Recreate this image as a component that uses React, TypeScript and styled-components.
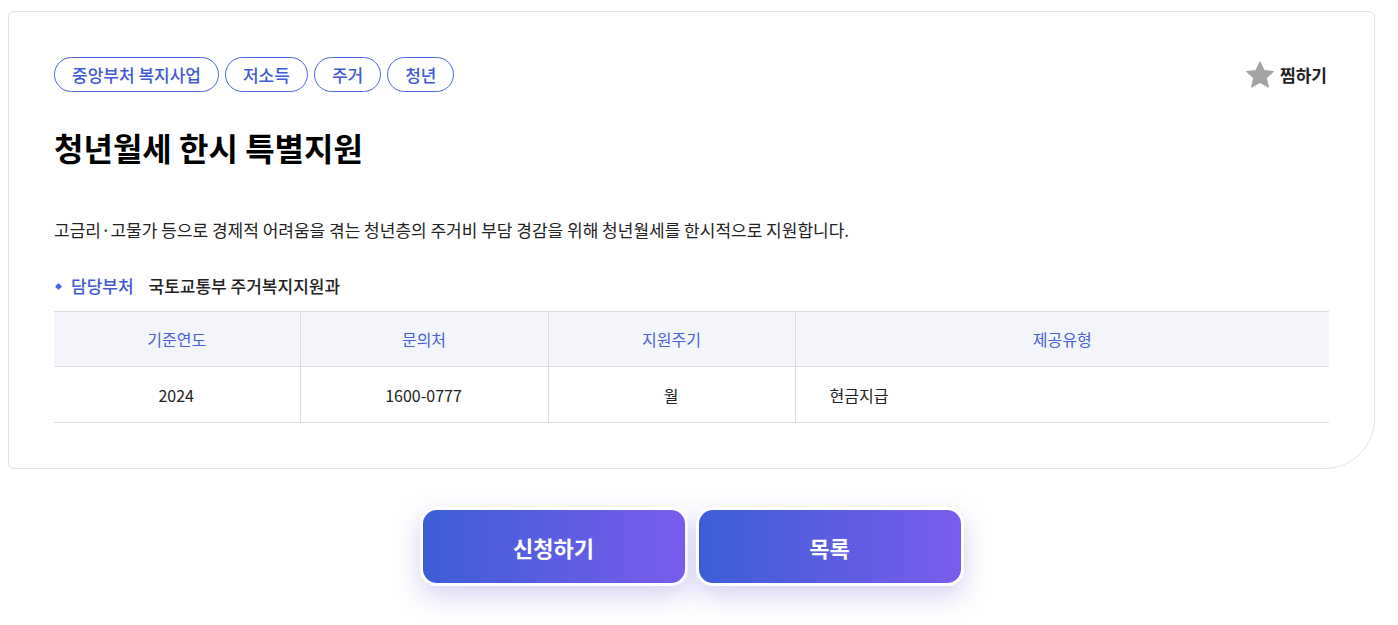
import React from "react";
import styled, { createGlobalStyle } from "styled-components";

const Global = createGlobalStyle`
  body {
    margin: 8px;
    font-family: "Noto Sans CJK KR", "Noto Sans", sans-serif;
    color: #222;
    background: #fff;
  }
  * { box-sizing: border-box; }
`;

const Page = styled.div`
  width: 1367px;
  padding-bottom: 40px;
`;

const Card = styled.section`
  margin-top: 3px;
  border: 1px solid #e2e2e2;
  border-radius: 6px 6px 50px 6px;
  padding: 45px 45px 45px 45px;
  background: #fff;
`;

const TopRow = styled.div`
  display: flex;
  align-items: center;
  justify-content: space-between;
`;

const Tags = styled.div`
  display: flex;
  gap: 6px;
`;

const Tag = styled.span`
  display: inline-flex;
  align-items: center;
  height: 35px;
  padding: 0 17px;
  border: 1px solid #4a67dc;
  border-radius: 18px;
  color: #3f5ad6;
  font-size: 17px;
  font-weight: 500;
`;

const Wish = styled.button`
  display: flex;
  align-items: center;
  gap: 5px;
  border: 0;
  background: none;
  padding: 0;
  margin-right: 2px;
  font-family: inherit;
  font-size: 17px;
  font-weight: 700;
  color: #222;
  cursor: pointer;
`;

const Title = styled.h1`
  margin: 33px 0 0;
  font-size: 32px;
  font-weight: 700;
  line-height: 44px;
  color: #000;
`;

const Desc = styled.p`
  margin: 48px 0 0;
  font-size: 17px;
  font-weight: 400;
  line-height: 26px;
  color: #222;
`;

const Dept = styled.div`
  display: flex;
  align-items: center;
  margin-top: 30px;
  font-size: 17px;
  line-height: 26px;
`;

const Bullet = styled.span`
  width: 5px;
  height: 5px;
  margin: 0 10px 0 2px;
  border-radius: 1px;
  background: #4a67dc;
  transform: rotate(45deg);
`;

const DeptLabel = styled.span`
  color: #3f5ad6;
  font-weight: 500;
  margin-right: 15px;
`;

const DeptValue = styled.span`
  color: #222;
  font-weight: 500;
`;

const Table = styled.table`
  width: 100%;
  margin-top: 12px;
  border-collapse: collapse;
  table-layout: fixed;
  border-top: 1px solid #dcdcdc;
`;

const Th = styled.th`
  height: 55px;
  background: #f4f5fa;
  color: #4660d8;
  font-size: 16px;
  font-weight: 400;
  border-bottom: 1px solid #dcdcdc;
  border-left: 1px solid #dcdcdc;
  &:first-child { border-left: 0; }
`;

const Td = styled.td<{ $left?: boolean }>`
  height: 56px;
  text-align: ${(p) => (p.$left ? "left" : "center")};
  padding-left: ${(p) => (p.$left ? "34px" : "0")};
  font-size: 16px;
  font-weight: 400;
  color: #222;
  border-bottom: 1px solid #dcdcdc;
  border-left: 1px solid #dcdcdc;
  &:first-child { border-left: 0; }
`;

const Actions = styled.div`
  display: flex;
  justify-content: center;
  gap: 8px;
  margin-top: 38px;
`;

const ActionButton = styled.button`
  width: 268px;
  height: 79px;
  border: 3px solid #fff;
  border-radius: 17px;
  background: linear-gradient(90deg, #3b5fd6 0%, #7a5ced 100%);
  box-shadow: 0 10px 26px rgba(96, 92, 210, 0.28);
  color: #fff;
  font-family: inherit;
  font-size: 22px;
  font-weight: 700;
  cursor: pointer;
`;

const Star = () => (
  <svg width="30" height="30" viewBox="0 0 24 24" aria-hidden="true">
    <path
      d="M12 1.6l3.2 6.9 7.3.8-5.5 5 1.6 7.3L12 17.8l-6.6 3.8 1.6-7.3-5.5-5 7.3-.8z"
      fill="#a3a3a3"
      stroke="#a3a3a3"
      strokeWidth="1"
      strokeLinejoin="round"
    />
  </svg>
);

export default function App() {
  return (
    <Page>
      <Global />
      <Card>
        <TopRow>
          <Tags>
            <Tag>중앙부처 복지사업</Tag>
            <Tag>저소득</Tag>
            <Tag>주거</Tag>
            <Tag>청년</Tag>
          </Tags>
          <Wish>
            <Star />
            찜하기
          </Wish>
        </TopRow>
        <Title>청년월세 한시 특별지원</Title>
        <Desc>
          고금리·고물가 등으로 경제적 어려움을 겪는 청년층의 주거비 부담 경감을 위해 청년월세를 한시적으로 지원합니다.
        </Desc>
        <Dept>
          <Bullet />
          <DeptLabel>담당부처</DeptLabel>
          <DeptValue>국토교통부 주거복지지원과</DeptValue>
        </Dept>
        <Table>
          <colgroup>
            <col style={{ width: "246px" }} />
            <col style={{ width: "248px" }} />
            <col style={{ width: "247px" }} />
            <col />
          </colgroup>
          <thead>
            <tr>
              <Th>기준연도</Th>
              <Th>문의처</Th>
              <Th>지원주기</Th>
              <Th>제공유형</Th>
            </tr>
          </thead>
          <tbody>
            <tr>
              <Td>2024</Td>
              <Td>1600-0777</Td>
              <Td>월</Td>
              <Td $left>현금지급</Td>
            </tr>
          </tbody>
        </Table>
      </Card>
      <Actions>
        <ActionButton>신청하기</ActionButton>
        <ActionButton>목록</ActionButton>
      </Actions>
    </Page>
  );
}
